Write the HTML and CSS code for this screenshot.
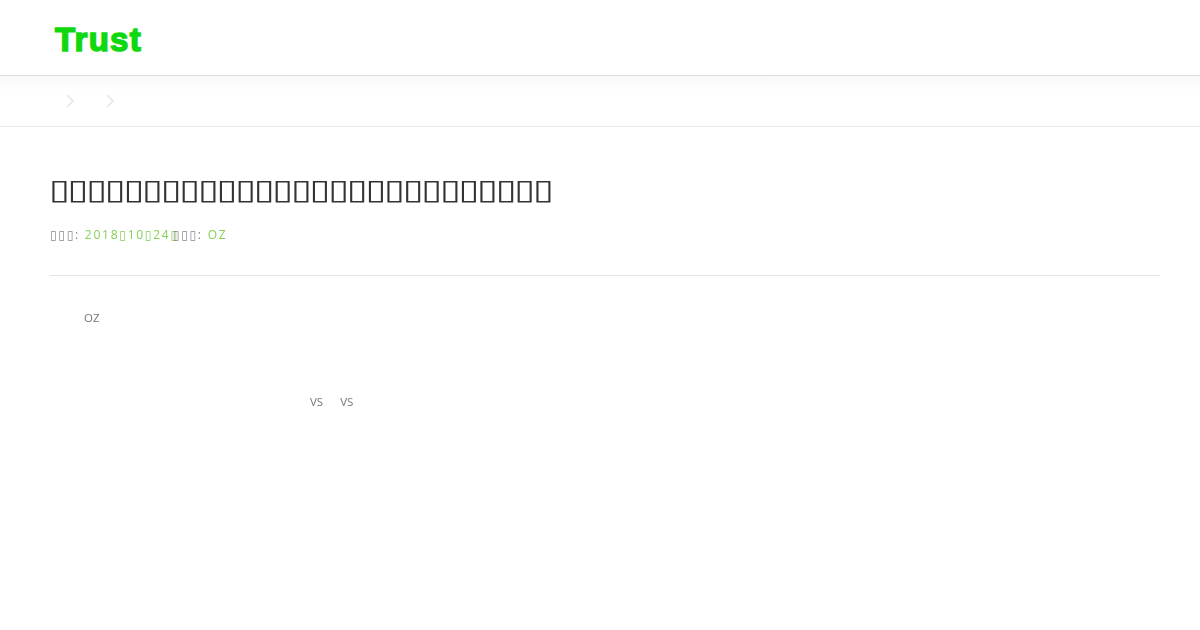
FILE: index.html
```html
<!DOCTYPE html>
<html lang="ja">
<head>
    <meta charset="UTF-8">
    <meta name="viewport" content="width=device-width, initial-scale=1.0">
    <title>Trust</title>
    <link rel="stylesheet" href="styles.css">
</head>
<body>

<!-- header -->
<header class="site-header">
    <a class="logo">Trust</a>
</header>

<!-- breadcrumb -->
<nav class="breadcrumb">
    <svg class="crumb-arrow" viewBox="0 0 10 14"><path d="M2 1l6 6-6 6"/></svg>
    <svg class="crumb-arrow" viewBox="0 0 10 14"><path d="M2 1l6 6-6 6"/></svg>
</nav>

<main class="content">
    <h1 class="post-title">▯▯▯▯▯▯▯▯▯▯▯▯▯▯▯▯▯▯▯▯▯▯▯▯▯▯▯</h1>
    <p class="post-meta">▯▯▯: <span class="meta-link meta-date">2018▯10▯24▯</span>▯▯▯: <span class="meta-link">OZ</span></p>
    <hr class="divider">
    <div class="post-body">
        <p class="line-author">OZ</p>
        <p class="line-vs"><span>VS</span><span>VS</span></p>
    </div>
</main>

</body>
</html>
```

FILE: styles.css
```css
body {
    margin: 0;
    height: 630px;
    overflow: hidden;
    background: #fff;
    font-family: "Open Sans", "DejaVu Sans", sans-serif;
    color: #666;
}

.site-header {
    height: 76px;
    padding: 3px 0 0 55px;
    display: flex;
    align-items: center;
    box-sizing: border-box;
    border-bottom: 1px solid #ddd;
    box-shadow: 0 1px 3px rgba(0, 0, 0, 0.06);
}

.logo {
    font-family: "Liberation Sans", sans-serif;
    font-weight: bold;
    font-size: 33px;
    letter-spacing: 1.25px;
    color: #0fd80f;
    -webkit-text-stroke: 1.5px #0fd80f;
    line-height: 1;
}

.breadcrumb {
    height: 51px;
    box-sizing: border-box;
    padding-left: 65px;
    display: flex;
    align-items: center;
    gap: 30px;
    border-bottom: 1px solid #e8e8e8;
    background: linear-gradient(#f8f8f8, #fff 16px);
}

.crumb-arrow {
    width: 10px;
    height: 14px;
    fill: none;
    stroke: #e6e6e6;
    stroke-width: 1.5;
}

.content {
    padding: 0 40px 0 50px;
    will-change: transform;
}

/* glyph is narrow, widen it to the box shape */
.post-title {
    width: fit-content;
    margin: 41px 0 0 -1px;
    font-size: 28px;
    font-weight: normal;
    line-height: 40px;
    letter-spacing: -1.62px;
    white-space: nowrap;
    color: #333;
    transform: scaleX(1.35);
    transform-origin: left;
}

.post-meta {
    margin: 17px 0 0;
    font-size: 12px;
    line-height: 20px;
    letter-spacing: 1.75px;
    color: #888;
}

.meta-link {
    color: #85cf55;
}

.meta-date {
    margin-right: -6px;
}

.divider {
    margin: 30px 0 0;
    border: 0;
    border-top: 1px solid #e5e5e5;
}

.post-body {
    font-size: 11.5px;
    color: #777;
}

.line-author {
    margin: 33px 0 0 34px;
    line-height: 18px;
}

.line-vs {
    margin: 66px 0 0 260px;
    line-height: 18px;
    display: flex;
    gap: 17px;
}
```
